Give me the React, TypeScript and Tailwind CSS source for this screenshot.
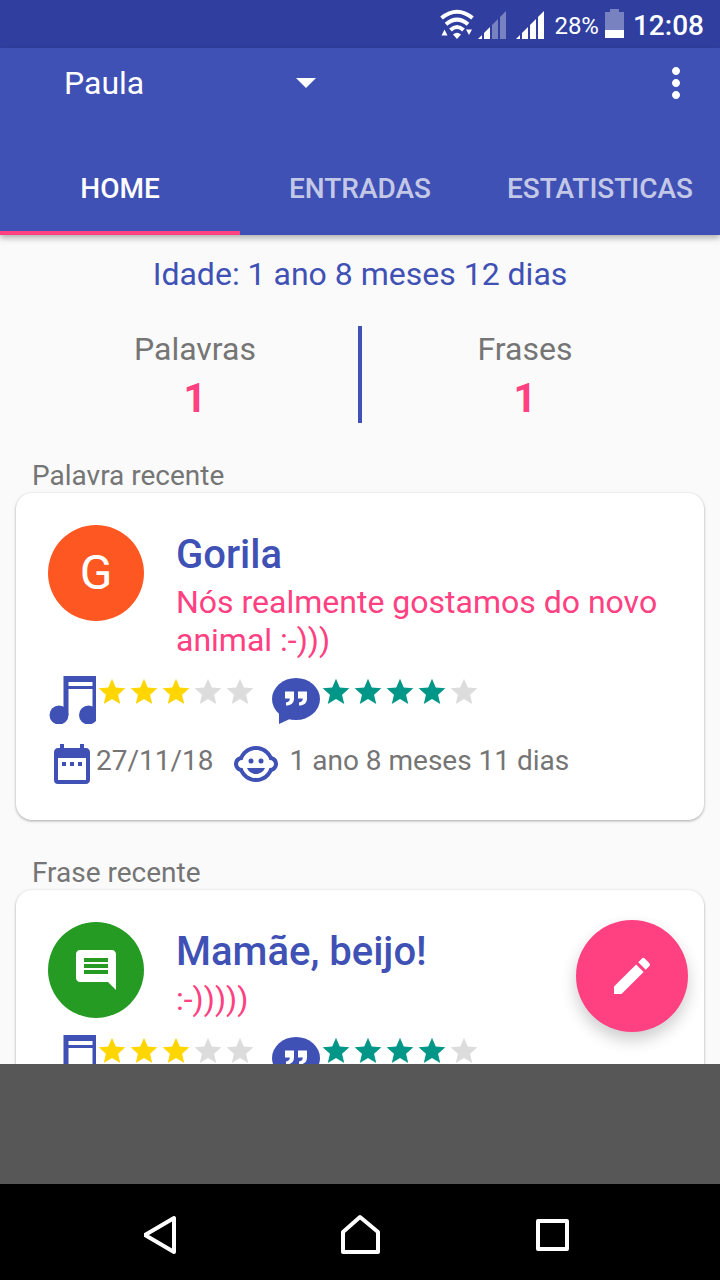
import { MdChildCare, MdComment, MdDateRange, MdEdit, MdMoreVert, MdStar } from 'react-icons/md';

const tabs = ['HOME', 'ENTRADAS', 'ESTATISTICAS'];

const totals = [
  { label: 'Palavras', value: 1 },
  { label: 'Frases', value: 1 },
];

function StatusBar() {
  return (
    <div className="flex h-12 items-center justify-end bg-[#303f9f] pt-1 pr-4 text-white">
      <svg className="mr-1 mb-1 h-[34px] w-[34px]" viewBox="0 0 34 34" fill="none" aria-hidden="true">
        <g stroke="currentColor" strokeWidth="4">
          <path d="M1.500 11Q17 -1.500 32.500 11" />
          <path d="M6 17.200Q17 8 28 17.200" />
          <path d="M10.500 23Q17 17 23.500 23" />
        </g>
        <path d="M13 27.500q4-3.500 8 0l-4 4.500zM1.500 28.500l3-6 3 6zM26 22.500h6l-3 5.500z" fill="currentColor" />
      </svg>
      <Signal level={2} />
      <div className="w-2.5" />
      <Signal level={4} />
      <span className="ml-2.5 text-2xl">28%</span>
      <svg className="mr-2 mb-1 ml-1.5 h-[30px] w-5" viewBox="0 0 20 30" fill="currentColor" aria-hidden="true">
        <path d="M0 3h5V0h9v3h5v18H0z" opacity=".35" />
        <path d="M0 21h19v8H0z" />
      </svg>
      <span className="text-[28px] font-medium">12:08</span>
    </div>
  );
}

function Signal({ level }: { level: number }) {
  const bars = ['M0 28l4-4v4z', 'M6 28v-6l6-6v12z', 'M14 28V14l6-6v20z', 'M22 28V6l6-6v28z'];
  return (
    <svg className="mb-0.5 h-7 w-7" viewBox="0 0 28 28" fill="currentColor" aria-hidden="true">
      {bars.map((d, i) => (
        <path key={d} d={d} opacity={i < level ? 1 : 0.35} />
      ))}
    </svg>
  );
}

function MusicIcon() {
  return (
    <svg className="size-12 shrink-0" viewBox="0 0 48 48" fill="currentColor" aria-hidden="true">
      <path d="M15.500 0H48v39h-3.500V13h-24v26h-5zM20.500 6v4h24V6z" fillRule="evenodd" />
      <circle cx="11" cy="39" r="9.500" />
      <circle cx="40.500" cy="39" r="9.500" />
    </svg>
  );
}

function QuoteIcon() {
  return (
    <svg className="size-12 shrink-0" viewBox="0 0 48 48" fill="currentColor" aria-hidden="true">
      <ellipse cx="24" cy="23" rx="24" ry="21" />
      <path d="M7 36v12l13-6z" />
      <path
        d="M13 15.500h9v7c0 4.500-3 7-8 7v-3c2.500-.3 3.800-1.500 3.800-4H13zM26 15.500h9v7c0 4.500-3 7-8 7v-3c2.500-.3 3.800-1.500 3.800-4H26z"
        fill="#fff"
      />
    </svg>
  );
}

function Stars({ value, color }: { value: number; color: string }) {
  return (
    <div className="flex" role="img" aria-label={`${value} de 5`}>
      {[1, 2, 3, 4, 5].map((n) => (
        <MdStar key={n} className={`size-8 ${n <= value ? color : 'text-[#dcdcdc]'}`} />
      ))}
    </div>
  );
}

type EntryProps = {
  section: string;
  avatar: React.ReactNode;
  avatarColor: string;
  title: string;
  note: string;
  date?: string;
  age?: string;
};

function Entry({ section, avatar, avatarColor, title, note, date, age }: EntryProps) {
  return (
    <section className="mb-9 px-4">
      <h2 className="px-4 pb-px text-[28px] leading-[33px] text-[#757575]">{section}</h2>
      <article className="rounded-2xl bg-white p-8 shadow-[0_1px_3px_rgba(0,0,0,0.35)]">
        <div className="flex gap-8">
          <div className={`flex size-24 shrink-0 items-center justify-center rounded-full text-5xl text-white ${avatarColor}`}>
            {avatar}
          </div>
          <div className="min-w-0 pt-1.5">
            <h3 className="text-[40px] leading-12 font-medium text-[#3f51b5]">{title}</h3>
            <p className="mt-1 text-[32px] leading-[38px] text-[#ff4081]">{note}</p>
          </div>
        </div>
        <div className="mt-[17px] flex items-start text-[#3f51b5]">
          <MusicIcon />
          <Stars value={3} color="text-[#ffd600]" />
          <div className="ml-4 flex">
            <QuoteIcon />
            <Stars value={4} color="text-[#009688]" />
          </div>
        </div>
        {date && (
          <div className="mt-4 flex items-start text-[28px] leading-[42px] text-[#757575]">
            <MdDateRange className="size-12 shrink-0 text-[#3f51b5]" />
            <time>{date}</time>
            <MdChildCare className="mr-2.5 ml-[18px] size-12 shrink-0 text-[#3f51b5]" />
            <span>{age}</span>
          </div>
        )}
      </article>
    </section>
  );
}

export default function App() {
  return (
    <div className="flex h-screen flex-col overflow-hidden bg-[#fafafa] font-['Roboto',sans-serif]">
      <StatusBar />

      <header className="relative z-10 bg-[#3f51b5] text-white shadow-[0_3px_6px_rgba(0,0,0,0.3)]">
        <div className="flex h-[70px] items-center justify-between pr-5 pl-16">
          <label className="relative flex w-64 items-center">
            <select aria-label="Criança" className="w-full appearance-none bg-transparent text-[32px] leading-10 outline-none">
              <option>Paula</option>
            </select>
            <svg className="pointer-events-none absolute right-1 h-2.5 w-5" viewBox="0 0 20 10" fill="currentColor" aria-hidden="true">
              <path d="M0 0h20L10 10z" />
            </svg>
          </label>
          <button type="button" aria-label="Mais opções">
            <MdMoreVert className="size-12" />
          </button>
        </div>
        <nav className="mt-5 grid grid-cols-3">
          {tabs.map((tab, i) => (
            <button
              key={tab}
              type="button"
              className={`h-[97px] border-b-4 pt-2 text-[28px] font-medium ${
                i === 0 ? 'border-[#ff4081]' : 'border-transparent text-white/70'
              }`}
            >
              {tab}
            </button>
          ))}
        </nav>
      </header>

      <main className="relative min-h-0 flex-1">
        <div className="h-full overflow-hidden pt-5">
          <p className="text-center text-[32px] leading-[38px] text-[#3f51b5]">Idade: 1 ano 8 meses 12 dias</p>

          <div className="mt-[33px] mb-9 flex h-[97px] px-8 text-center">
            {totals.map((total, i) => (
              <div key={total.label} className="contents">
                {i > 0 && <div className="w-1 bg-[#3f51b5]" />}
                <div className="flex-1 pt-1">
                  <p className="text-[32px] leading-[38px] text-[#757575]">{total.label}</p>
                  <p className="mt-[7px] text-[40px] leading-12 font-bold text-[#ff4081]">{total.value}</p>
                </div>
              </div>
            ))}
          </div>

          <Entry
            section="Palavra recente"
            avatar="G"
            avatarColor="bg-[#ff5722]"
            title="Gorila"
            note="Nós realmente gostamos do novo animal :-)))"
            date="27/11/18"
            age="1 ano 8 meses 11 dias"
          />
          <Entry
            section="Frase recente"
            avatar={<MdComment />}
            avatarColor="bg-[#259b24]"
            title="Mamãe, beijo!"
            note=":-)))))"
          />
        </div>

        <button
          type="button"
          aria-label="Nova entrada"
          className="absolute right-8 bottom-8 flex size-28 items-center justify-center rounded-full bg-[#ff4081] text-white shadow-[0_8px_16px_rgba(0,0,0,0.2)]"
        >
          <MdEdit className="size-12" />
        </button>
      </main>

      <div className="relative h-[120px] shrink-0 bg-[#575757]" />

      <nav className="flex h-24 shrink-0 justify-center bg-black pt-2 text-white">
        <button type="button" aria-label="Voltar" className="flex w-48 items-center justify-center">
          <svg className="size-12" viewBox="0 0 48 48" fill="none" stroke="currentColor" strokeWidth="4" strokeLinejoin="round">
            <path d="M1 23L30 6v34z" />
          </svg>
        </button>
        <button type="button" aria-label="Início" className="flex w-48 items-center justify-center">
          <svg className="size-12" viewBox="0 0 48 48" fill="none" stroke="currentColor" strokeWidth="4" strokeLinejoin="round">
            <path d="M7 40V20L24 5l18 15v20z" />
          </svg>
        </button>
        <button type="button" aria-label="Recentes" className="flex w-48 items-center justify-center">
          <svg className="size-12" viewBox="0 0 48 48" fill="none" stroke="currentColor" strokeWidth="4" strokeLinejoin="round">
            <path d="M10 9h29v28H10z" />
          </svg>
        </button>
      </nav>
    </div>
  );
}
